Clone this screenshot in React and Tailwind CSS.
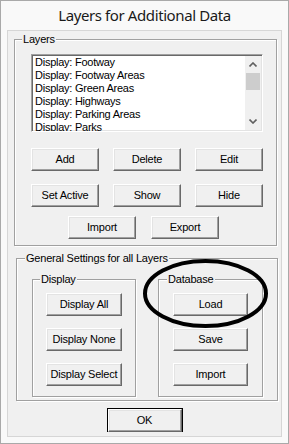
import React from "react";

const font = { fontFamily: '"Liberation Sans", Arial, sans-serif' };

function Btn({ children, className = "" }) {
  return (
    <div
      className={
        "flex items-center justify-center h-[23px] bg-[#f0f0f0] border border-t-white border-l-white border-r-[#696969] border-b-[#696969] shadow-[inset_-1px_-1px_0_#a0a0a0,inset_1px_1px_0_#e3e3e3] text-[11px] tracking-[-0.2px] text-black " +
        className
      }
    >
      {children}
    </div>
  );
}

function Group({ label, className = "", legendClass = "ml-[7px]", children }) {
  return (
    <fieldset
      className={
        "border border-[#a0a0a0] shadow-[inset_1px_1px_0_#fff,1px_1px_0_#fff] p-0 m-0 " +
        className
      }
    >
      <legend
        className={
          "px-[1px] bg-[#f0f0f0] text-[11px] leading-[13px] tracking-[-0.2px] text-black " +
          legendClass
        }
      >
        {label}
      </legend>
      {children}
    </fieldset>
  );
}

const items = [
  "Display: Footway",
  "Display: Footway Areas",
  "Display: Green Areas",
  "Display: Highways",
  "Display: Parking Areas",
  "Display: Parks",
];

export default function App() {
  return (
    <div
      className="relative w-[289px] h-[444px] bg-[#f9f9f9] border border-[#a9a9a9] flex flex-col overflow-hidden"
      style={font}
    >
      <div
        className="h-[29px] flex items-center justify-center text-[15px] tracking-[-0.4px] text-[#1a1a1a]"
        style={{ fontFamily: '"Noto Sans", "Open Sans", sans-serif' }}
      >
        Layers for Additional Data
      </div>
      <div className="mx-[6px] h-[407px] border border-[#d6d6d6] bg-[#f0f0f0] flex flex-col">
        {/* Layers */}
        <Group label="Layers" className="mt-[2px] ml-[6px] w-[263px] h-[213px]">
          <div className="mt-[8px] ml-[16px] w-[232px] h-[78px] bg-white border border-t-[#a0a0a0] border-l-[#a0a0a0] border-r-white border-b-white shadow-[inset_1px_1px_0_#696969,inset_-1px_-1px_0_#e3e3e3] flex overflow-hidden">
            <div className="flex-1 pt-[1px] pl-[3px] overflow-hidden">
              {items.map((t) => (
                <div
                  key={t}
                  className="h-[13px] leading-[13px] text-[11px] tracking-[-0.25px] text-black whitespace-nowrap"
                >
                  {t}
                </div>
              ))}
            </div>
            <div className="w-[16px] my-[1px] mr-[1px] bg-[#f0f0f0] flex flex-col">
              <div className="h-[17px] flex items-center justify-center">
                <svg width="8" height="5" viewBox="0 0 8 5">
                  <path d="M0.5 4.5 L4 1 L7.5 4.5" stroke="#606060" strokeWidth="1.6" fill="none" />
                </svg>
              </div>
              <div className="h-[17px] mx-[1px] bg-[#cdcdcd]" />
              <div className="flex-1" />
              <div className="h-[17px] flex items-center justify-center">
                <svg width="8" height="5" viewBox="0 0 8 5">
                  <path d="M0.5 0.5 L4 4 L7.5 0.5" stroke="#606060" strokeWidth="1.6" fill="none" />
                </svg>
              </div>
            </div>
          </div>
          <div className="mt-[16px] ml-[16px] grid grid-cols-[68px_68px_68px] gap-x-[14px]">
            <Btn>Add</Btn>
            <Btn>Delete</Btn>
            <Btn>Edit</Btn>
          </div>
          <div className="mt-[13px] ml-[16px] grid grid-cols-[68px_68px_68px] gap-x-[14px]">
            <Btn>Set Active</Btn>
            <Btn>Show</Btn>
            <Btn>Hide</Btn>
          </div>
          <div className="mt-[9px] ml-[53px] grid grid-cols-[68px_68px] gap-x-[15px]">
            <Btn>Import</Btn>
            <Btn>Export</Btn>
          </div>
        </Group>

        {/* General settings */}
        <Group
          label="General Settings for all Layers"
          className="mt-[6px] ml-[8px] w-[262px] h-[149px]"
          legendClass="ml-[8px]"
        >
          <div className="mt-[8px] ml-[15px] flex gap-x-[22px]">
            <Group label="Display" className="w-[104px] h-[124px]">
              <div className="mt-[7px] ml-[13px] w-[76px] flex flex-col gap-y-[12px]">
                <Btn>Display All</Btn>
                <Btn>Display None</Btn>
                <Btn>Display Select</Btn>
              </div>
            </Group>
            <Group label="Database" className="w-[105px] h-[124px]" legendClass="ml-[8px]">
              <div className="mt-[7px] ml-[14px] w-[75px] flex flex-col gap-y-[12px]">
                <Btn>Load</Btn>
                <Btn>Save</Btn>
                <Btn>Import</Btn>
              </div>
            </Group>
          </div>
        </Group>

        <div className="mt-[7px] mx-auto w-[76px] h-[24px] border border-black">
          <Btn className="h-[22px]">OK</Btn>
        </div>
      </div>

      <svg
        className="absolute left-0 top-0 pointer-events-none"
        width="289"
        height="444"
        viewBox="0 0 289 444"
      >
        <ellipse cx="204.5" cy="292.5" rx="60.5" ry="32.5" fill="none" stroke="#000" strokeWidth="4" />
      </svg>
    </div>
  );
}
